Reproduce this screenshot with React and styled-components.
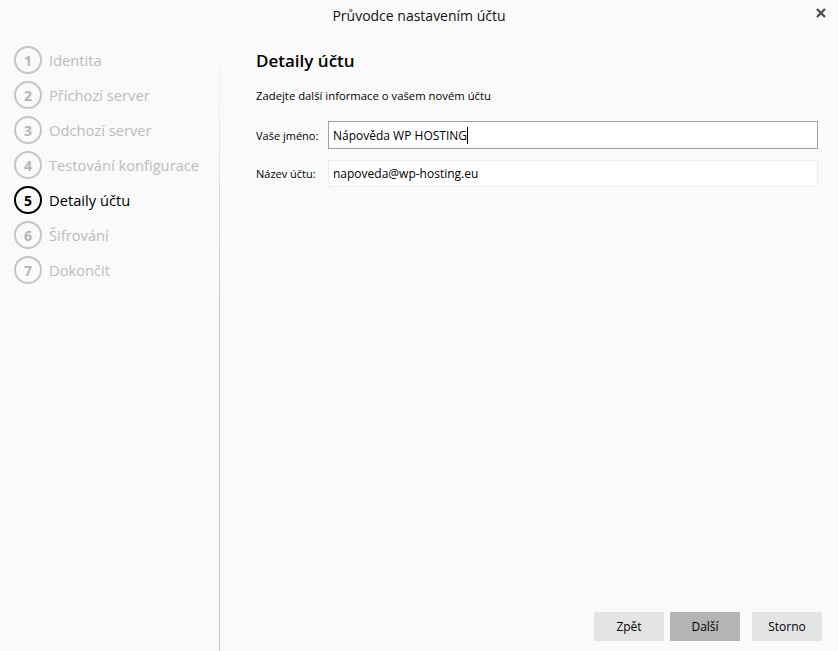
import styled, { createGlobalStyle } from 'styled-components';

const GlobalStyle = createGlobalStyle`
    html, body {
        margin: 0;
        padding: 0;
        background: #fafafa;
    }
    body {
        font-family: "Open Sans", "Noto Sans", sans-serif;
        color: #000;
    }
`;

const Window = styled.div`
    width: 838px;
    height: 651px;
    display: flex;
    flex-direction: column;
    background: #fafafa;
    overflow: hidden;
`;

const TitleBar = styled.div`
    position: relative;
    height: 30px;
    display: flex;
    align-items: center;
    justify-content: center;
    font-size: 14px;
    color: #111;
`;

const Close = styled.div`
    position: absolute;
    right: 12px;
    top: 8px;
    width: 10px;
    height: 10px;
    color: #505050;
    display: flex;
`;

const Body = styled.div`
    flex: 1;
    display: grid;
    grid-template-columns: 219px 1px 1fr;
`;

const Steps = styled.ol`
    list-style: none;
    margin: 0;
    padding: 16px 0 0 14px;
    display: flex;
    flex-direction: column;
    gap: 7px;
`;

const Step = styled.li`
    display: flex;
    align-items: center;
    gap: 7px;
    height: 28px;
    font-size: 14.7px;
    color: ${props => props.active ? '#000' : '#bcbcbc'};
    white-space: nowrap;
`;

const Circle = styled.span`
    box-sizing: border-box;
    width: 28px;
    height: 28px;
    border-radius: 50%;
    border: 2px solid ${props => props.active ? '#000' : '#c6c6c6'};
    display: flex;
    align-items: center;
    justify-content: center;
    font-weight: 700;
    font-size: 14px;
    color: ${props => props.active ? '#000' : '#b4b4b4'};
`;

const Divider = styled.div`
    margin-top: 5px;
    background: linear-gradient(to bottom, rgba(200,200,200,0) 0%, #c8c8c8 45%, #c4c4c4 100%);
`;

const Content = styled.div`
    display: flex;
    flex-direction: column;
    padding: 18px 16px 10px 36px;
`;

const Heading = styled.h1`
    margin: 0;
    font-size: 17px;
    font-weight: 600;
    line-height: 26px;
`;

const Intro = styled.p`
    margin: 14px 0 17px;
    font-size: 11.3px;
    line-height: 16px;
`;

const Form = styled.div`
    display: grid;
    grid-template-columns: 72px 1fr;
    row-gap: 11px;
    align-items: center;
    margin-right: 4px;
`;

const Label = styled.label`
    font-size: 11px;
`;

const Field = styled.div`
    box-sizing: border-box;
    height: ${props => props.focused ? '28px' : '27px'};
    border: 1px solid ${props => props.focused ? '#a0a0a0' : '#ececec'};
    background: #fff;
    display: flex;
    align-items: center;
    padding: 0 4px;
    font-size: 12px;
`;

const Caret = styled.span`
    display: inline-block;
    width: 1px;
    height: 17px;
    background: #000;
    vertical-align: middle;
`;

const Spacer = styled.div`
    flex: 1;
`;

const Buttons = styled.div`
    display: flex;
    justify-content: flex-end;
    gap: 6px;
`;

const Button = styled.button`
    width: 70px;
    height: 29px;
    border: none;
    margin-left: ${props => props.gapLeft || '0'};
    background: ${props => props.primary ? '#b4b4b4' : '#e4e4e4'};
    font-family: "Open Sans", "Noto Sans", sans-serif;
    font-size: 12px;
    color: #000;
`;

const steps = [
    'Identita',
    'Příchozí server',
    'Odchozí server',
    'Testování konfigurace',
    'Detaily účtu',
    'Šifrování',
    'Dokončit',
];

const App = () => {
    const current = 5;
    return (
        <Window>
            <GlobalStyle />
            <TitleBar>
                Průvodce nastavením účtu
                <Close>
                    <svg width="10" height="10" viewBox="0 0 10 10">
                        <path d="M1 1L9 9M9 1L1 9" stroke="currentColor" strokeWidth="2.4" />
                    </svg>
                </Close>
            </TitleBar>
            <Body>
                <Steps>
                    {steps.map((s, i) => (
                        <Step key={s} active={i + 1 === current}>
                            <Circle active={i + 1 === current}>{i + 1}</Circle>
                            {s}
                        </Step>
                    ))}
                </Steps>
                <Divider />
                <Content>
                    <Heading>Detaily účtu</Heading>
                    <Intro>Zadejte další informace o vašem novém účtu</Intro>
                    <Form>
                        <Label>Vaše jméno:</Label>
                        <Field focused>Nápověda WP HOSTING<Caret /></Field>
                        <Label>Název účtu:</Label>
                        <Field>napoveda@wp-hosting.eu</Field>
                    </Form>
                    <Spacer />
                    <Buttons>
                        <Button>Zpět</Button>
                        <Button primary>Další</Button>
                        <Button gapLeft="6px">Storno</Button>
                    </Buttons>
                </Content>
            </Body>
        </Window>
    );
};

export default App;
